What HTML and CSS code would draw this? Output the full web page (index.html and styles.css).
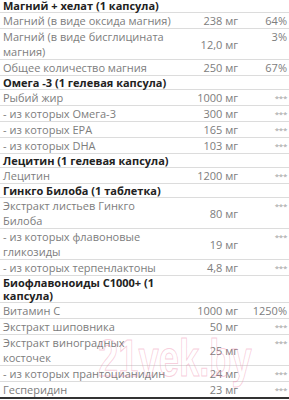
FILE: index.html
```html
<!DOCTYPE html>
<html lang="ru">
<head>
<meta charset="utf-8">
<title>Состав</title>
<link rel="stylesheet" href="styles.css">
</head>
<body>
<div class="wrap">
<table class="comp">
<colgroup><col class="c-name"><col class="c-amt"><col class="c-pct"></colgroup>
<tbody>
<tr class="ttl"><td>Магний + хелат (1 капсула)</td><td></td><td></td></tr>
<tr><td>Магний (в виде оксида магния)</td><td class="amt">238 мг</td><td class="pct">64%</td></tr>
<tr><td>Магний (в виде бисглицината<br>магния)</td><td class="amt">12,0 мг</td><td class="pct">3%</td></tr>
<tr><td>Общее количество магния</td><td class="amt">250 мг</td><td class="pct">67%</td></tr>
<tr class="ttl"><td>Омега -3 (1 гелевая капсула)</td><td></td><td></td></tr>
<tr><td>Рыбий жир</td><td class="amt">1000 мг</td><td class="pct st">***</td></tr>
<tr><td>- из которых Омега-3</td><td class="amt">300 мг</td><td class="pct st">***</td></tr>
<tr><td>- из которых EPA</td><td class="amt">165 мг</td><td class="pct st">***</td></tr>
<tr><td>- из которых DHA</td><td class="amt">103 мг</td><td class="pct st">***</td></tr>
<tr class="ttl"><td>Лецитин (1 гелевая капсула)</td><td></td><td></td></tr>
<tr><td>Лецитин</td><td class="amt">1200 мг</td><td class="pct st">***</td></tr>
<tr class="ttl"><td>Гинкго Билоба (1 таблетка)</td><td></td><td></td></tr>
<tr><td>Экстракт листьев Гинкго<br>Билоба</td><td class="amt">80 мг</td><td class="pct st">***</td></tr>
<tr><td>- из которых флавоновые<br>гликозиды</td><td class="amt">19 мг</td><td class="pct st">***</td></tr>
<tr><td>- из которых терпенлактоны</td><td class="amt">4,8 мг</td><td class="pct st">***</td></tr>
<tr class="ttl"><td>Биофлавоноиды C1000+ (1<br>капсула)</td><td></td><td></td></tr>
<tr><td>Витамин C</td><td class="amt">1000 мг</td><td class="pct">1250%</td></tr>
<tr><td>Экстракт шиповника</td><td class="amt">50 мг</td><td class="pct st">***</td></tr>
<tr><td>Экстракт виноградных<br>косточек</td><td class="amt">25 мг</td><td class="pct st">***</td></tr>
<tr><td>- из которых прантоцианидин</td><td class="amt">24 мг</td><td class="pct st">***</td></tr>
<tr class="last"><td>Гесперидин</td><td class="amt">23 мг</td><td class="pct st">***</td></tr>
</tbody>
</table>
<div class="wm">21vek.by</div>
</div>
</body>
</html>
```
FILE: styles.css
```css
html, body {
  margin: 0;
  padding: 0;
  background: #ffffff;
}
body {
  font-family: "Open Sans", "DejaVu Sans", sans-serif;
  font-size: 11px;
  color: #7d7d7d;
  overflow: hidden;
}
.wrap {
  position: relative;
  width: 289px;
  height: 401px;
  margin-top: -1px;
  overflow: hidden;
}
.comp {
  width: 289px;
  border-collapse: collapse;
  table-layout: fixed;
}
.c-name { width: 190px; }
.c-amt { width: 49px; }
.c-pct { width: 50px; }
.comp td {
  padding: 0 0 0 3px;
  line-height: 15px;
  border-bottom: 1px solid #dcdcdc;
  vertical-align: top;
  white-space: nowrap;
}
.comp td.amt {
  text-align: right;
  vertical-align: middle;
  padding-left: 0;
  padding-right: 1px;
}
.comp td.pct {
  text-align: right;
  padding-right: 2px;
  padding-left: 0;
}
.comp td.st {
  font-size: 8px;
  color: #a0a0a0;
  letter-spacing: -0.3px;
}
.comp tr.ttl td {
  font-weight: 700;
  color: #222222;
  line-height: 13px;
}
.comp tr.last td {
  border-bottom: 2px solid #333333;
}
.wm {
  position: absolute;
  left: 98px;
  top: 333px;
  font-family: "Liberation Sans", sans-serif;
  font-weight: 700;
  font-size: 52px;
  line-height: 52px;
  color: transparent;
  -webkit-text-stroke: 1px rgba(236, 130, 165, 0.4);
  transform: scaleX(0.7);
  transform-origin: left top;
  pointer-events: none;
}
```
